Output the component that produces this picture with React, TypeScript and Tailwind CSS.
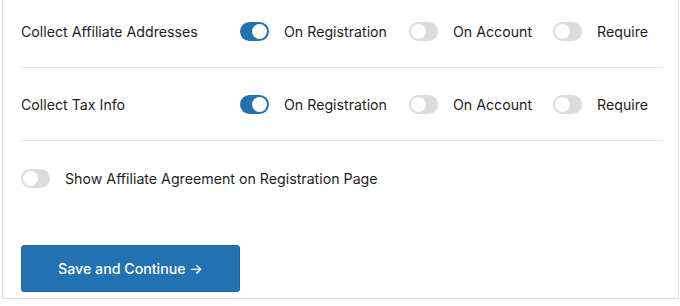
const font = { fontFamily: '"Inter", "Liberation Sans", sans-serif' };

function Toggle({ on }: { on: boolean }) {
  return on ? (
    <span className="relative inline-block h-[19px] w-[29px] shrink-0 rounded-full bg-[#2271b1]">
      <span className="absolute top-[2px] right-[2px] h-[15px] w-[15px] rounded-full bg-white" />
    </span>
  ) : (
    <span className="relative inline-block h-[19px] w-[29px] shrink-0 rounded-full bg-[#dcdcde]">
      <span className="absolute top-[2px] left-[2px] h-[15px] w-[15px] rounded-full bg-white" />
    </span>
  );
}

function Option({ on, label, w }: { on: boolean; label: string; w: string }) {
  return (
    <div className={`flex items-center gap-[15px] ${w}`}>
      <Toggle on={on} />
      <span>{label}</span>
    </div>
  );
}

function Row({ label }: { label: string }) {
  return (
    <div className="flex h-[73px] items-center border-b border-[#e6e6e6] pt-[2px]">
      <div className="w-[219px]">{label}</div>
      <Option on={true} label="On Registration" w="w-[169px]" />
      <Option on={false} label="On Account" w="w-[144px]" />
      <Option on={false} label="Require" w="" />
    </div>
  );
}

export default function App() {
  return (
    <div className="h-[306px] w-[680px] overflow-hidden bg-white" style={font}>
      <div className="ml-[2px] h-[304px] w-[677px] border border-t-0 border-[#e0e0e0] pr-[15px] pl-[18px] text-[14.2px] text-[#1e1e1e]">
        <div className="-mt-[5px]">
          <Row label="Collect Affiliate Addresses" />
          <Row label="Collect Tax Info" />
        </div>
        <div className="flex h-[75px] items-center gap-[15px]">
          <Toggle on={false} />
          <span>Show Affiliate Agreement on Registration Page</span>
        </div>
        <button className="mt-[29px] h-[47px] w-[219px] rounded-[3px] border border-[#1f64a0] bg-[#2271b1] text-[14.2px] font-medium text-white">
          Save and Continue →
        </button>
      </div>
    </div>
  );
}
